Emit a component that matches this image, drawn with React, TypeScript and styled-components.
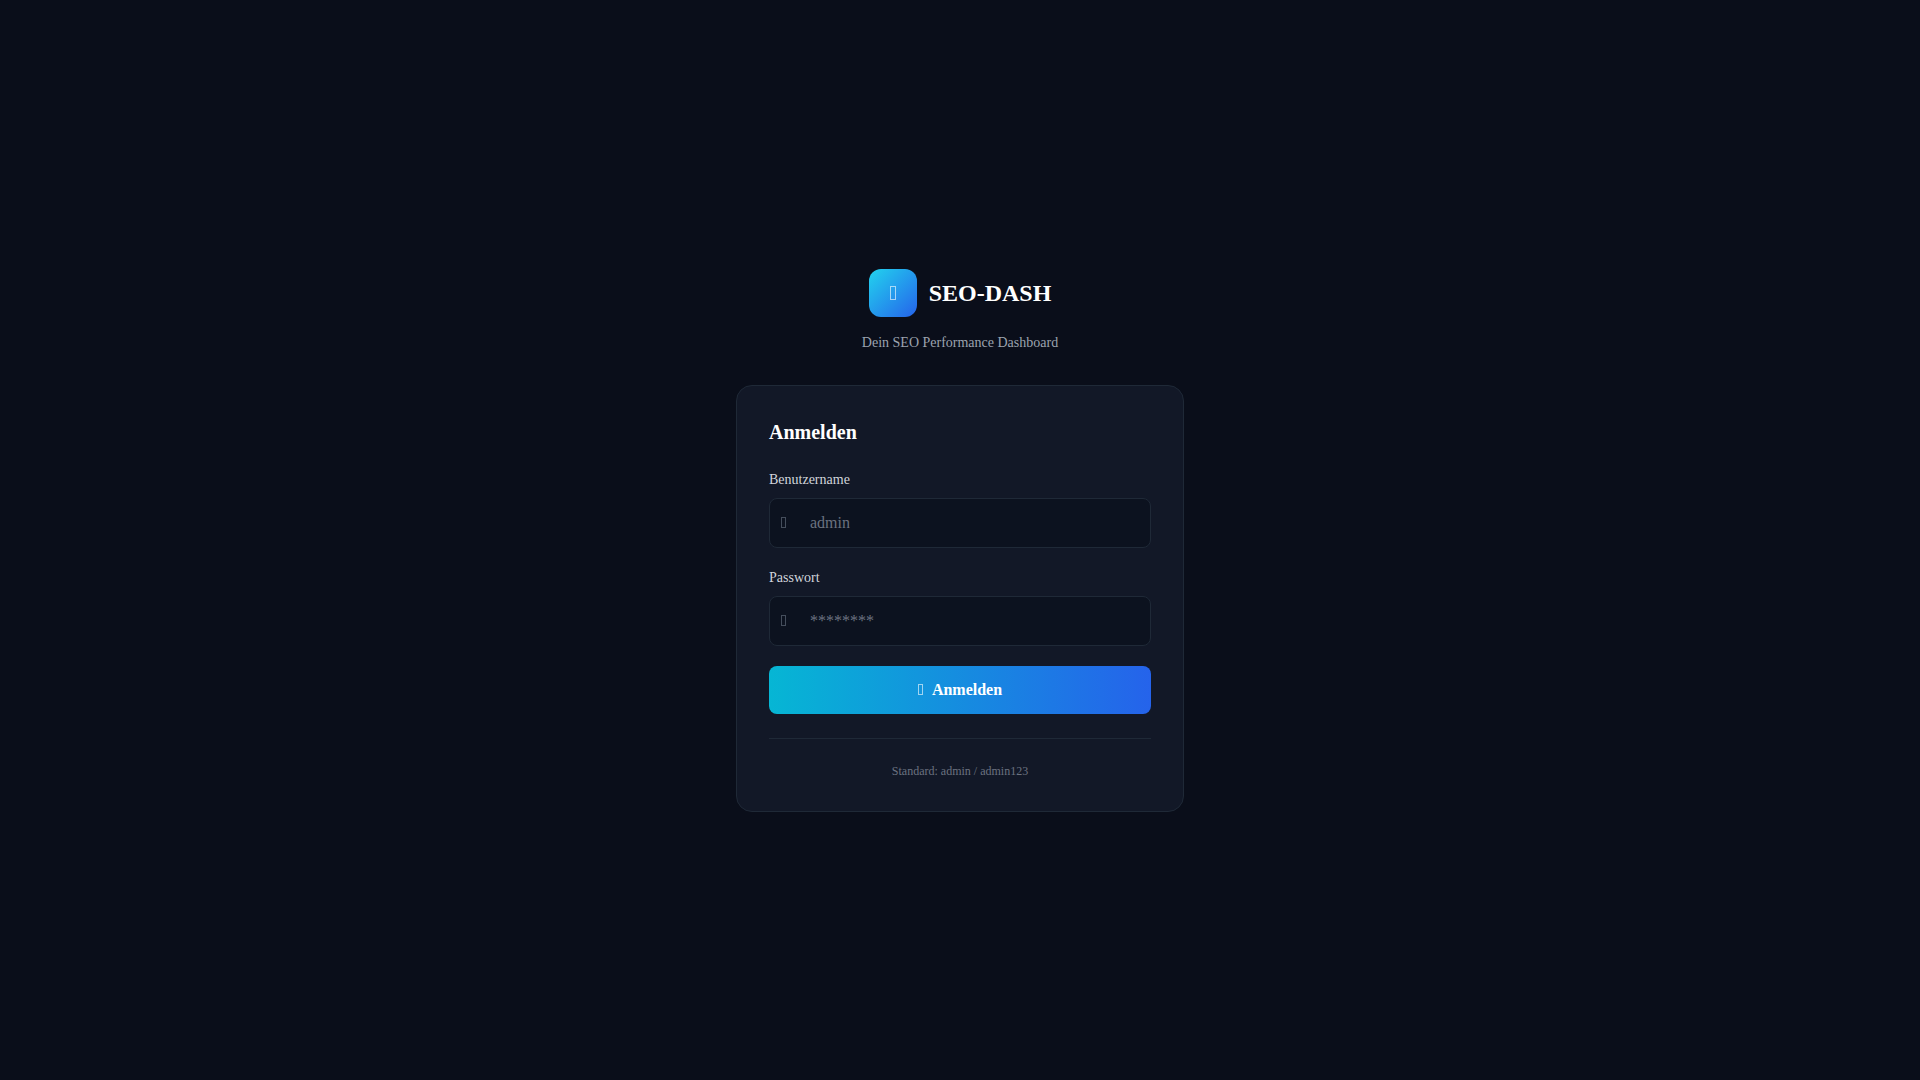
import React from "react";
import styled, { createGlobalStyle } from "styled-components";

const GlobalStyle = createGlobalStyle`
  *, *::before, *::after { box-sizing: border-box; }
  body {
    margin: 0;
    background: #0a0e1a;
    color: #ffffff;
    font-family: "Liberation Serif", "Times New Roman", serif;
    font-size: 16px;
    line-height: 24px;
  }
`;

const Page = styled.div`
  min-height: 100vh;
  display: flex;
  align-items: center;
  justify-content: center;
  padding: 16px;
`;

const Column = styled.main`
  width: 100%;
  max-width: 448px;
  display: flex;
  flex-direction: column;
  gap: 32px;
`;

const Header = styled.header`
  display: flex;
  flex-direction: column;
  align-items: center;
  gap: 16px;
`;

const Brand = styled.div`
  display: flex;
  align-items: center;
  gap: 12px;
`;

const Logo = styled.div`
  width: 48px;
  height: 48px;
  display: flex;
  align-items: center;
  justify-content: center;
  border-radius: 12px;
  background: linear-gradient(to bottom right, #22d3ee, #2563eb);
`;

const GlyphSvg = styled.svg`
  display: block;
  flex: none;
  fill: none;
  stroke: currentColor;
`;

const BrandName = styled.h1`
  margin: 0;
  font-size: 24px;
  line-height: 32px;
  font-weight: 700;
`;

const Tagline = styled.p`
  margin: 0;
  font-size: 14px;
  line-height: 20px;
  color: #9ca3af;
`;

const Card = styled.section`
  padding: 32px;
  border: 1px solid #1f2937;
  border-radius: 16px;
  background: #121827;
`;

const CardTitle = styled.h2`
  margin: 0 0 24px;
  font-size: 20px;
  line-height: 28px;
  font-weight: 600;
`;

const Form = styled.form`
  display: flex;
  flex-direction: column;
  gap: 20px;
`;

const Field = styled.div`
  display: flex;
  flex-direction: column;
  gap: 8px;
`;

const Label = styled.label`
  font-size: 14px;
  line-height: 20px;
  color: #d1d5db;
`;

const InputFrame = styled.div`
  display: flex;
  align-items: center;
  border: 1px solid #1f2937;
  border-radius: 8px;
  background: #0c121f;
  color: #4b5563;

  &:focus-within { border-color: #06b6d4; }
`;

const InputIcon = styled.span`
  width: 40px;
  padding-left: 11px;
  display: flex;
  align-items: center;
`;

const Input = styled.input`
  flex: 1;
  min-width: 0;
  padding: 12px 16px 12px 0;
  border: 0;
  outline: 0;
  background: transparent;
  color: #ffffff;
  font: inherit;
  line-height: 24px;

  &::placeholder { color: #6b7280; opacity: 1; }
`;

const Submit = styled.button`
  display: flex;
  align-items: center;
  justify-content: center;
  gap: 8px;
  padding: 12px 16px;
  border: 0;
  border-radius: 8px;
  background: linear-gradient(to right, #06b6d4, #2563eb);
  color: #ffffff;
  font: inherit;
  font-weight: 600;
  line-height: 24px;
  cursor: pointer;
`;

const Hint = styled.p`
  margin: 24px 0 0;
  padding-top: 24px;
  border-top: 1px solid #1f2937;
  text-align: center;
  font-size: 12px;
  line-height: 16px;
  color: #6b7280;
`;

/* Hollow upright box in two sizes: small beside text, large in the logo. */
function BoxGlyph({ large = false, opacity = 1 }: { large?: boolean; opacity?: number }) {
  return large ? (
    <GlyphSvg width="6" height="14" viewBox="0 0 6 14" aria-hidden="true">
      <rect x="0.5" y="0.5" width="5" height="13" strokeOpacity={opacity} />
    </GlyphSvg>
  ) : (
    <GlyphSvg width="6" height="12" viewBox="0 0 6 12" aria-hidden="true">
      <rect x="0.5" y="0.5" width="4" height="10" strokeOpacity={opacity} />
    </GlyphSvg>
  );
}

type TextFieldProps = {
  id: string;
  label: string;
  placeholder: string;
  type?: string;
};

function TextField({ id, label, placeholder, type = "text" }: TextFieldProps) {
  return (
    <Field>
      <Label htmlFor={id}>{label}</Label>
      <InputFrame>
        <InputIcon>
          <BoxGlyph opacity={0.9} />
        </InputIcon>
        <Input id={id} name={id} type={type} placeholder={placeholder} />
      </InputFrame>
    </Field>
  );
}

export default function App() {
  return (
    <>
      <GlobalStyle />
      <Page>
        <Column>
          <Header>
            <Brand>
              <Logo>
                <BoxGlyph large opacity={0.6} />
              </Logo>
              <BrandName>SEO-DASH</BrandName>
            </Brand>
            <Tagline>Dein SEO Performance Dashboard</Tagline>
          </Header>
          <Card>
            <CardTitle>Anmelden</CardTitle>
            <Form onSubmit={(event) => event.preventDefault()}>
              <TextField id="username" label="Benutzername" placeholder="admin" />
              <TextField id="password" label="Passwort" placeholder="********" type="password" />
              <Submit type="submit">
                <BoxGlyph opacity={0.6} />
                Anmelden
              </Submit>
            </Form>
            <Hint>Standard: admin / admin123</Hint>
          </Card>
        </Column>
      </Page>
    </>
  );
}
